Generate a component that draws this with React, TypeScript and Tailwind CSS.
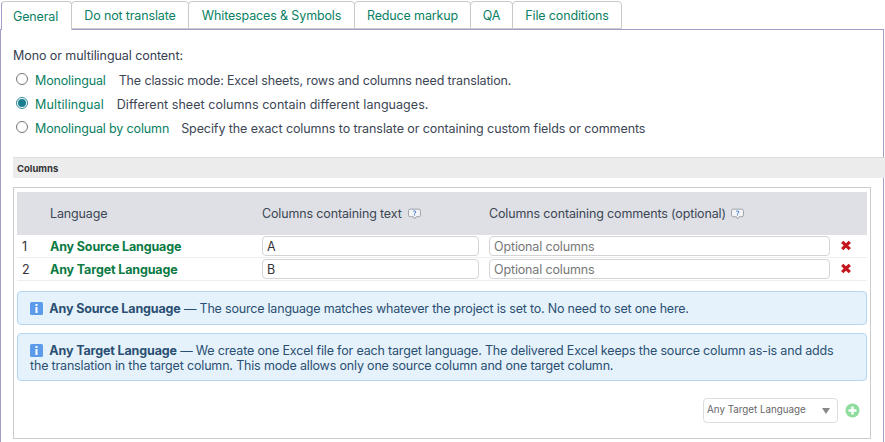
import React from "react";

const tabs = ["General", "Do not translate", "Whitespaces & Symbols", "Reduce markup", "QA", "File conditions"];
const tabWidths = ["w-[71px]", "w-[118px]", "w-[167px]", "w-[117px]", "w-[43px]", "w-[110px]"];

function Radio({ on }: { on?: boolean }) {
  return (
    <span className={"shrink-0 -mt-[5px] w-[12px] h-[12px] rounded-full border flex items-center justify-center bg-white " + (on ? "border-[#2f8c9c]" : "border-[#767676]")}>
      {on && <span className="w-[8px] h-[8px] rounded-full bg-[#1a7f90]" />}
    </span>
  );
}

function Help() {
  return (
    <svg width="13" height="12" viewBox="0 0 12 11" className="inline-block">
      <path d="M2 1h8a1.500 1.500 0 0 1 1.500 1.500v4A1.500 1.500 0 0 1 10 8H7.500L6 10 5 8H2A1.500 1.500 0 0 1 .5 6.500v-4A1.500 1.500 0 0 1 2 1z" fill="#f4f5f7" stroke="#9ea2a8" strokeWidth="0.9" />
      <path d="M4.700 3.300c.3-.8 2.600-.9 2.600.4 0 .8-1.300.8-1.300 1.600" fill="none" stroke="#2f6fc9" strokeWidth="0.9" />
      <rect x="5.500" y="5.900" width="1" height="1" fill="#2f6fc9" />
    </svg>
  );
}

function Cross() {
  return (
    <svg width="12" height="11" viewBox="0 0 12 11">
      <path d="M2.200 1.800 9.800 9.200M9.800 1.800 2.200 9.200" stroke="#c4161c" strokeWidth="3.200" fill="none" />
    </svg>
  );
}

function Info() {
  return (
    <svg width="13" height="13" viewBox="0 0 13 13" className="inline-block align-[-2px]">
      <rect width="13" height="13" rx="1.500" fill="#5b9bea" />
      <rect x="5.500" y="2" width="2" height="2" fill="#fff" />
      <rect x="5.500" y="5" width="2" height="6" fill="#fff" />
    </svg>
  );
}

function Row({ n, lang, val }: { n: string; lang: string; val: string }) {
  return (
    <div className="grid grid-cols-[33px_212px_227px_351px_27px] h-[23px] items-center border-b border-[#eeeeee]">
      <span className="pl-[5px] pt-px text-[#333]">{n}</span>
      <span className="font-bold pt-px text-[#0b7a43]">{lang}</span>
      <div className="h-[20px] w-[217px] border border-[#d4d4d4] rounded-[4px] flex items-center pl-[4px] pt-[2px] text-[#333]">{val}</div>
      <div className="h-[20px] w-[341px] border border-[#d4d4d4] rounded-[4px] flex items-center pl-[4px] pt-[2px] text-[#777]">Optional columns</div>
      <span className="flex items-center -mt-[2px]"><Cross /></span>
    </div>
  );
}

export default function App() {
  return (
    <div className="w-[885px] h-[442px] overflow-hidden bg-white text-[12.5px] tracking-[-0.14px] leading-[16px] text-[#3c4654] font-['Inter','Liberation_Sans',sans-serif]">
      <div className="h-[29px] pt-px pl-px flex">
        {tabs.map((t, i) => (
          <div
            key={t}
            className={
              tabWidths[i] +
              " border border-[#c9c9c9] rounded-t-[4px] -ml-px first:ml-0 pt-[2px] flex items-center justify-center text-[#0a7f63] bg-white " +
              (i === 0 ? "h-[29px] border-b-0 border-l-[#a69cc9] relative z-10 pr-[2px]" : "h-[28px]")
            }
          >
            {t}
          </div>
        ))}
      </div>
      <div className="w-[884px] h-[420px] border border-[#a69cc9]">
        <div className="pl-[12px] pt-[18px] tracking-[-0.07px] text-[#364152]">Mono or multilingual content:</div>
        <div className="pl-[15px] pt-[9px] flex flex-col gap-[8px]">
          <div className="flex items-center h-[16px]"><Radio /><span className="ml-[7px] text-[#0a7f63]">Monolingual</span><span className="ml-[13px]">The classic mode: Excel sheets, rows and columns need translation.</span></div>
          <div className="flex items-center h-[16px]"><Radio on /><span className="ml-[7px] tracking-[0.1px] text-[#0a7f63]">Multilingual</span><span className="ml-[13px] tracking-[0.05px]">Different sheet columns contain different languages.</span></div>
          <div className="flex items-center h-[16px]"><Radio /><span className="ml-[7px] text-[#0a7f63]">Monolingual by column</span><span className="ml-[12px] tracking-[-0.08px]">Specify the exact columns to translate or containing custom fields or comments</span></div>
        </div>
        <div className="ml-[12px] mr-[-2px] mt-[20px] h-[21px] bg-[#ececec] border-t border-[#dddddd] flex items-center pl-[4px] pt-px text-[9.500px] tracking-normal font-bold text-[#333]">Columns</div>
        <div className="ml-[12px] mt-[9px] w-[858px] h-[252px] border border-[#cccccc] pt-[4px] px-[3px]">
          <div className="w-[850px]">
            <div className="grid grid-cols-[33px_212px_227px_378px] h-[43px] items-center bg-[#dee0e5]">
              <span />
              <span>Language</span>
              <span className="flex items-center gap-[6px]">Columns containing text <Help /></span>
              <span className="flex items-center gap-[5px]">Columns containing comments (optional) <Help /></span>
            </div>
            <Row n="1" lang="Any Source Language" val="A" />
            <Row n="2" lang="Any Target Language" val="B" />
          </div>
          <div className="mt-[10px] w-[850px] h-[34px] border border-[#b3d7f2] rounded-[4px] bg-[#e5f2fb] flex items-center px-[12px] pt-[2px] tracking-[-0.2px] text-[#2a4f72]">
            <span><Info /> <b className="ml-[3px] tracking-[-0.14px]">Any Source Language</b> — The source language matches whatever the project is set to. No need to set one here.</span>
          </div>
          <div className="mt-[8px] w-[850px] h-[48px] border border-[#b3d7f2] rounded-[4px] bg-[#e5f2fb] px-[12px] pt-[9px] leading-[15px] tracking-[-0.17px] text-[#2a4f72]">
            <Info /> <b className="ml-[3px] tracking-[-0.14px]">Any Target Language</b> — We create one Excel file for each target language. The delivered Excel keeps the source column as-is and adds the translation in the target column. This mode allows only one source column and one target column.
          </div>
          <div className="mt-[17px] flex items-center justify-end pr-[7px] gap-[7px]">
            <div className="w-[135px] h-[25px] border border-[#dddddd] rounded-[4px] flex items-center justify-between pl-[3px] pr-[7px] text-[9.800px] tracking-normal text-[#666]">
              <span className="-mt-[2px]">Any Target Language</span>
              <span className="w-0 h-0 border-l-[4px] border-r-[4px] border-t-[6px] border-l-transparent border-r-transparent border-t-[#888]" />
            </div>
            <svg width="15" height="15" viewBox="0 0 15 15">
              <circle cx="7.500" cy="7.500" r="7" fill="#8fdc9f" />
              <path d="M6.300 3.500h2.400v2.800h2.800v2.400H8.700v2.800H6.300V8.700H3.500V6.300h2.800z" fill="#fff" />
            </svg>
          </div>
        </div>
      </div>
    </div>
  );
}
